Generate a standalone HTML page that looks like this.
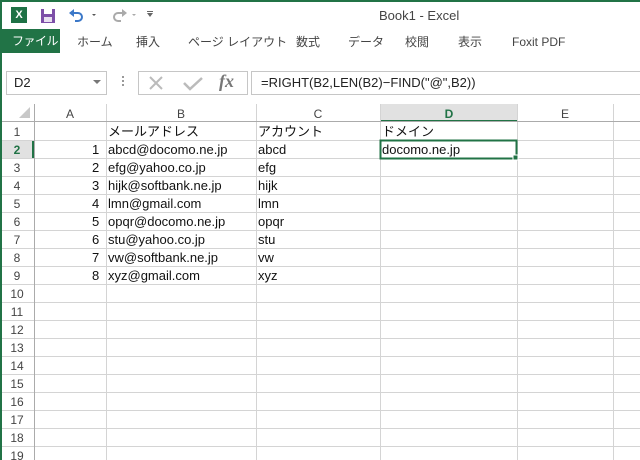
<!DOCTYPE html>
<html><head><meta charset="utf-8"><style>
*{margin:0;padding:0;box-sizing:border-box}
body{width:640px;height:460px;overflow:hidden;background:#fff;font-family:"Liberation Sans","Noto Sans CJK JP",sans-serif;position:relative;color:#222}
.a{position:absolute}
.t{font-size:13px;white-space:nowrap;line-height:16px}
.tab{position:absolute;top:34px;font-size:12px;color:#444;white-space:nowrap;line-height:16px}
.cell{position:absolute;font-size:13px;white-space:nowrap;color:#111;line-height:18px;height:18px}
</style></head><body>
<div class="a" style="left:0;top:0;width:640px;height:2px;background:#217346"></div>
<div class="a" style="left:11px;top:7px;width:16px;height:16px;background:#1e7145;color:#fff;font-size:11px;font-weight:bold;text-align:center;line-height:16px">X</div>
<svg class="a" style="left:40px;top:8px" width="16" height="16"><rect x="1" y="1" width="14" height="14" fill="#7d4fa8"/><rect x="4" y="1" width="8" height="5" fill="#fff"/><rect x="4" y="9" width="8" height="5" fill="#e8e0f0"/></svg>
<svg class="a" style="left:68px;top:8px" width="30" height="14"><path d="M4 5 H10 A4 4 0 0 1 10 13 H7" stroke="#3b78c8" stroke-width="2" fill="none"/><path d="M1 5 L6 1 L6 9 Z" fill="#3b78c8"/><path d="M24 6 l2 2 l2-2z" fill="#555"/></svg>
<svg class="a" style="left:108px;top:8px" width="30" height="14"><path d="M16 5 H10 A4 4 0 0 0 10 13 H13" stroke="#aaa" stroke-width="2" fill="none"/><path d="M19 5 L14 1 L14 9 Z" fill="#aaa"/><path d="M24 6 l2 2 l2-2z" fill="#aaa"/></svg>
<div class="a" style="left:147px;top:11px;width:6px;height:1px;background:#666"></div>
<svg class="a" style="left:147px;top:13px" width="7" height="5"><path d="M0 0 L6 0 L3 4z" fill="#666"/></svg>
<div class="a t" style="left:379px;top:8px;color:#444">Book1 - Excel</div>
<div class="a" style="left:0;top:29px;width:60px;height:24px;background:#217346;color:#fff;font-size:12px;line-height:24px;padding-left:12px;white-space:nowrap;overflow:hidden;letter-spacing:-0.5px">ファイル</div>
<div class="tab" style="left:77px">ホーム</div>
<div class="tab" style="left:136px">挿入</div>
<div class="tab" style="left:188px">ページ レイアウト</div>
<div class="tab" style="left:296px">数式</div>
<div class="tab" style="left:348px">データ</div>
<div class="tab" style="left:405px">校閲</div>
<div class="tab" style="left:458px">表示</div>
<div class="tab" style="left:512px">Foxit PDF</div>
<div class="a" style="left:6px;top:71px;width:101px;height:24px;border:1px solid #c6c6c6;font-size:13px;line-height:22px;padding-left:7px">D2</div>
<svg class="a" style="left:93px;top:80px" width="8" height="5"><path d="M0 0H8L4 4z" fill="#777"/></svg>
<div class="a" style="left:122px;top:76px;width:2px;height:2px;background:#999;box-shadow:0 4px #999,0 8px #999"></div>
<div class="a" style="left:138px;top:71px;width:110px;height:24px;border:1px solid #c6c6c6"></div>
<svg class="a" style="left:147px;top:75px" width="20" height="16"><path d="M3 2 L15 14 M15 2 L3 14" stroke="#bbb" stroke-width="2"/></svg>
<svg class="a" style="left:182px;top:75px" width="22" height="16"><path d="M2 8 L8 14 L20 3" stroke="#bbb" stroke-width="2.5" fill="none"/></svg>
<div class="a" style="left:219px;top:70px;font-family:'Liberation Serif',serif;font-style:italic;font-weight:bold;font-size:18px;color:#777;line-height:22px">fx</div>
<div class="a" style="left:251px;top:71px;width:389px;height:24px;border:1px solid #c6c6c6;border-right:none;font-size:13px;line-height:22px;padding-left:9px;white-space:nowrap">=RIGHT(B2,LEN(B2)−FIND("@",B2))</div>
<svg class="a" style="left:0;top:104px" width="640" height="356">
<rect x="380" y="0" width="137" height="18" fill="#e1e1e1"/>
<rect x="380" y="16" width="137" height="2" fill="#217346"/>
<rect x="0" y="36" width="34" height="18" fill="#e1e1e1"/>
<rect x="32" y="36" width="2" height="18" fill="#217346"/>
<path d="M19 14 L30 14 L30 3 Z" fill="#c8c8c8"/>
<g stroke="#d4d4d4" stroke-width="1">
<path d="M106.5 0V356M256.5 0V356M380.5 0V356M517.5 0V356M613.5 0V356"/>
<path d="M0 36.5H640M0 54.5H640M0 72.5H640M0 90.5H640M0 108.5H640M0 126.5H640M0 144.5H640M0 162.5H640M0 180.5H640M0 198.5H640M0 216.5H640M0 234.5H640M0 252.5H640M0 270.5H640M0 288.5H640M0 306.5H640M0 324.5H640M0 342.5H640"/>
</g>
<path d="M34.5 0V356M0 17.5H640" stroke="#ababab"/>
<rect x="380.5" y="36.5" width="136" height="18" fill="none" stroke="#217346" stroke-width="2"/>
<rect x="513" y="51" width="5" height="5" fill="#217346" stroke="#fff"/>
<g font-family="Liberation Sans,sans-serif" font-size="12" fill="#444" text-anchor="middle">
<text x="70" y="14">A</text><text x="181" y="14">B</text><text x="318" y="14">C</text><text x="449" y="14" fill="#217346" font-weight="bold">D</text><text x="565" y="14">E</text>
<text x="17" y="32">1</text><text x="17" y="50" fill="#217346" font-weight="bold">2</text><text x="17" y="68">3</text><text x="17" y="86">4</text><text x="17" y="104">5</text><text x="17" y="122">6</text><text x="17" y="140">7</text><text x="17" y="158">8</text><text x="17" y="176">9</text><text x="17" y="194">10</text><text x="17" y="212">11</text><text x="17" y="230">12</text><text x="17" y="248">13</text><text x="17" y="266">14</text><text x="17" y="284">15</text><text x="17" y="302">16</text><text x="17" y="320">17</text><text x="17" y="338">18</text><text x="17" y="356">19</text>
</g>
</svg>
<div class="cell" style="left:108px;top:123px">メールアドレス</div>
<div class="cell" style="left:258px;top:123px">アカウント</div>
<div class="cell" style="left:382px;top:123px">ドメイン</div>
<div class="cell" style="left:382px;top:141px">docomo.ne.jp</div>
<div class="cell" style="left:92px;top:141px">1</div><div class="cell" style="left:108px;top:141px">abcd@docomo.ne.jp</div><div class="cell" style="left:258px;top:141px">abcd</div>
<div class="cell" style="left:92px;top:159px">2</div><div class="cell" style="left:108px;top:159px">efg@yahoo.co.jp</div><div class="cell" style="left:258px;top:159px">efg</div>
<div class="cell" style="left:92px;top:177px">3</div><div class="cell" style="left:108px;top:177px">hijk@softbank.ne.jp</div><div class="cell" style="left:258px;top:177px">hijk</div>
<div class="cell" style="left:92px;top:195px">4</div><div class="cell" style="left:108px;top:195px">lmn@gmail.com</div><div class="cell" style="left:258px;top:195px">lmn</div>
<div class="cell" style="left:92px;top:213px">5</div><div class="cell" style="left:108px;top:213px">opqr@docomo.ne.jp</div><div class="cell" style="left:258px;top:213px">opqr</div>
<div class="cell" style="left:92px;top:231px">6</div><div class="cell" style="left:108px;top:231px">stu@yahoo.co.jp</div><div class="cell" style="left:258px;top:231px">stu</div>
<div class="cell" style="left:92px;top:249px">7</div><div class="cell" style="left:108px;top:249px">vw@softbank.ne.jp</div><div class="cell" style="left:258px;top:249px">vw</div>
<div class="cell" style="left:92px;top:267px">8</div><div class="cell" style="left:108px;top:267px">xyz@gmail.com</div><div class="cell" style="left:258px;top:267px">xyz</div>
<div class="a" style="left:0;top:0;width:2px;height:460px;background:#217346"></div>
</body></html>
